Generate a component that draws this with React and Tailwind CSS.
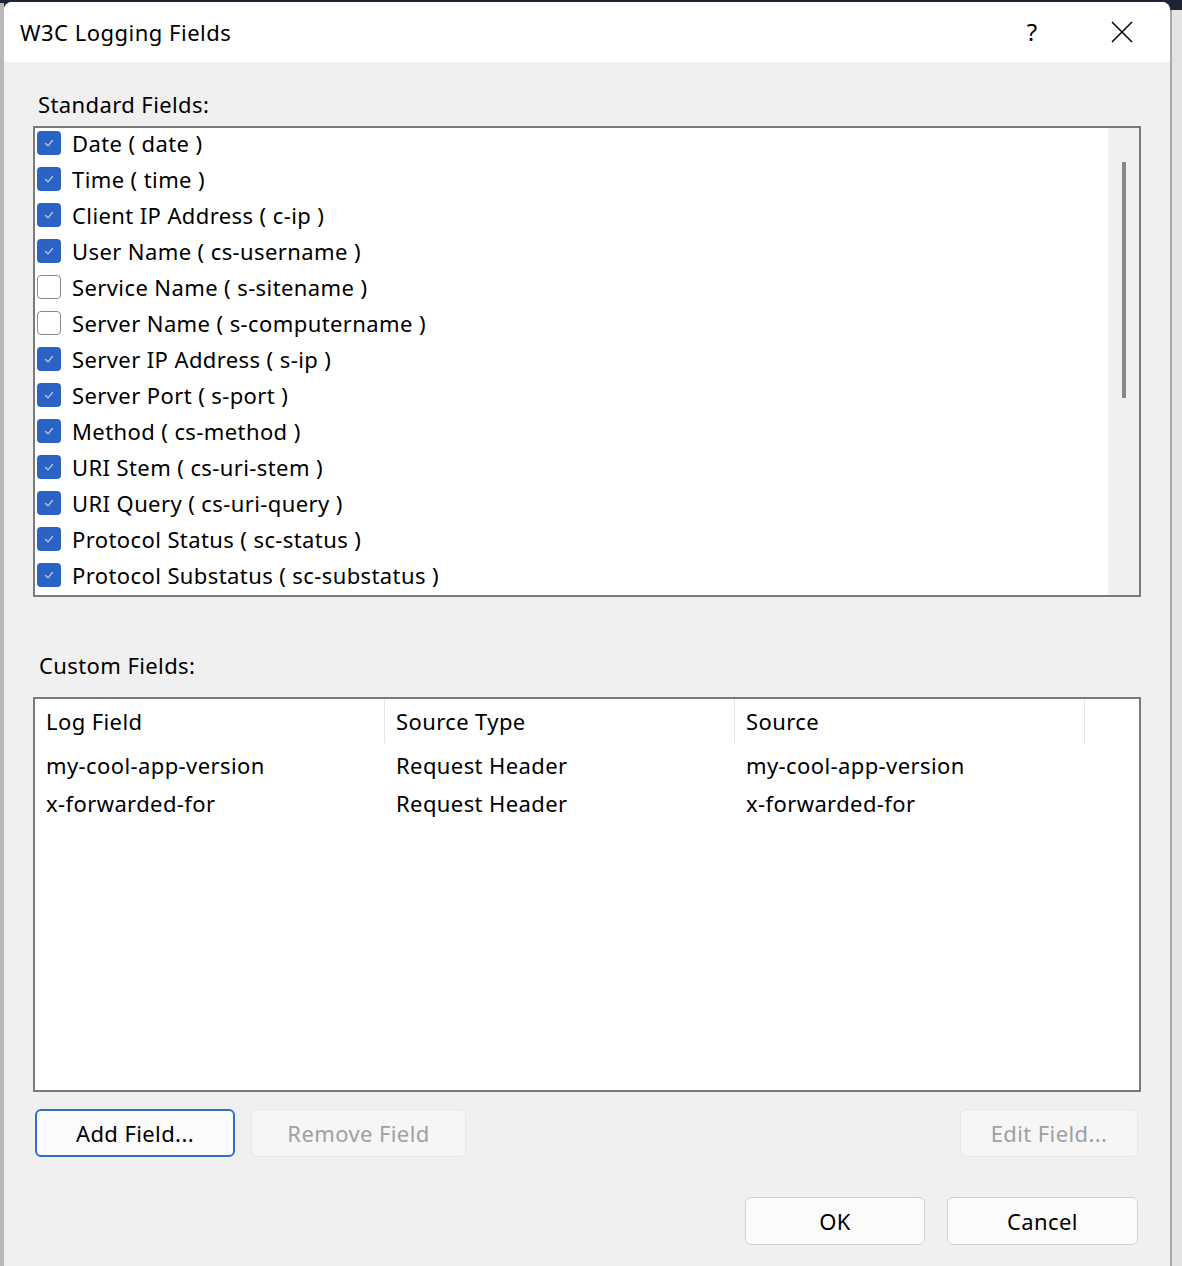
import React from "react";

const fields = [
  { label: "Date ( date )", on: true },
  { label: "Time ( time )", on: true },
  { label: "Client IP Address ( c-ip )", on: true },
  { label: "User Name ( cs-username )", on: true },
  { label: "Service Name ( s-sitename )", on: false },
  { label: "Server Name ( s-computername )", on: false },
  { label: "Server IP Address ( s-ip )", on: true },
  { label: "Server Port ( s-port )", on: true },
  { label: "Method ( cs-method )", on: true },
  { label: "URI Stem ( cs-uri-stem )", on: true },
  { label: "URI Query ( cs-uri-query )", on: true },
  { label: "Protocol Status ( sc-status )", on: true },
  { label: "Protocol Substatus ( sc-substatus )", on: true },
];

const custom = [
  ["my-cool-app-version", "Request Header", "my-cool-app-version"],
  ["x-forwarded-for", "Request Header", "x-forwarded-for"],
];

function Check({ on }) {
  if (!on) {
    return <div className="w-[24px] h-[24px] shrink-0 rounded-[4px] border border-[#8a8a8a] bg-white" />;
  }
  return (
    <div className="w-[24px] h-[24px] shrink-0 rounded-[4px] bg-[#2b63c4] flex items-center justify-center">
      <svg width="14" height="14" viewBox="0 0 14 14" fill="none">
        <path d="M3.5 7.5 L6 9.8 L10.5 4.5" stroke="#b9cdef" strokeWidth="1.2" strokeLinecap="round" strokeLinejoin="round" />
      </svg>
    </div>
  );
}

function Btn({ children, w, primary, disabled }) {
  let cls = "h-[48px] rounded-[6px] flex items-center justify-center text-[22px] tracking-[0.4px] ";
  if (primary) cls += "border-2 border-[#2f6fcb] bg-[#fbfbfb] text-black";
  else if (disabled) cls += "border border-[#e6e6e6] bg-[#f6f6f6] text-[#a0a0a0]";
  else cls += "border border-[#d2d2d2] bg-[#fbfbfb] text-black";
  return (
    <div className={cls} style={{ width: w }}>
      {children}
    </div>
  );
}

export default function App() {
  return (
    <div className="w-[1182px] h-[1266px] bg-[#1e2433] pt-[2px] flex overflow-hidden" style={{ fontFamily: '"Noto Sans", "Open Sans", sans-serif' }}>
      <div className="w-[4px] mt-[1px] bg-[#b8b8b8]" />
      <div className="w-[1166px] flex flex-col bg-[#f0f0f0] rounded-t-[8px] overflow-hidden">
        {/* title bar */}
        <div className="h-[60px] bg-white flex items-center pl-[16px] shrink-0">
          <div className="text-[22px] tracking-[0.5px] text-black flex-1">W3C Logging Fields</div>
          <div className="w-[40px] text-center text-[24px] text-black mr-[26px]">?</div>
          <div className="w-[92px] flex justify-center pr-[4px]">
            <svg width="22" height="22" viewBox="0 0 22 22">
              <path d="M1 1 L21 21 M21 1 L1 21" stroke="#000" strokeWidth="1.5" />
            </svg>
          </div>
        </div>

        <div className="flex-1 flex flex-col px-[29px] pt-[27px] text-black tracking-[0.4px]">
          <div className="h-[30px] leading-[30px] text-[22px] pl-[5px] mb-[7px]">Standard Fields:</div>
          <div className="h-[471px] border-2 border-[#7a7a7a] bg-white flex">
            <div className="flex-1 flex flex-col pl-[2px] -mt-[3px]">
              {fields.map((f, i) => (
                <div key={i} className="h-[36px] shrink-0 flex items-center gap-[11px]">
                  <Check on={f.on} />
                  <span className="text-[22px] leading-[30px] whitespace-nowrap">{f.label}</span>
                </div>
              ))}
            </div>
            <div className="w-[31px] bg-[#f0f0f0] flex justify-center pt-[34px]">
              <div className="w-[4px] h-[236px] bg-[#888888]" />
            </div>
          </div>

          <div className="h-[30px] leading-[30px] text-[22px] pl-[6px] mt-[53px] mb-[17px]">Custom Fields:</div>
          <div className="h-[395px] border-2 border-[#7a7a7a] bg-white flex flex-col">
            <div className="flex h-[44px] items-center mb-[3px]">
              {["Log Field", "Source Type", "Source"].map((h, i) => (
                <div key={i} className="w-[350px] h-full flex items-center pl-[11px] border-r border-[#e5e5e5] text-[22px]">
                  {h}
                </div>
              ))}
            </div>
            {custom.map((r, i) => (
              <div key={i} className="flex h-[38px] items-center">
                {r.map((c, j) => (
                  <div key={j} className="w-[350px] pl-[11px] text-[22px] whitespace-nowrap">{c}</div>
                ))}
              </div>
            ))}
          </div>

          <div className="flex mt-[17px] pl-[2px] pr-[3px]">
            <Btn w={200} primary>Add Field...</Btn>
            <div className="ml-[16px]">
              <Btn w={215} disabled>Remove Field</Btn>
            </div>
            <div className="flex-1" />
            <Btn w={178} disabled>Edit Field...</Btn>
          </div>

          <div className="flex justify-end mt-[40px] pr-[3px] gap-[22px]">
            <Btn w={180}>OK</Btn>
            <Btn w={191}>Cancel</Btn>
          </div>
        </div>
      </div>
      <div className="flex-1 mt-[8px] bg-[#e4e4e4] border-l-2 border-[#a8a8a8]" />
    </div>
  );
}
